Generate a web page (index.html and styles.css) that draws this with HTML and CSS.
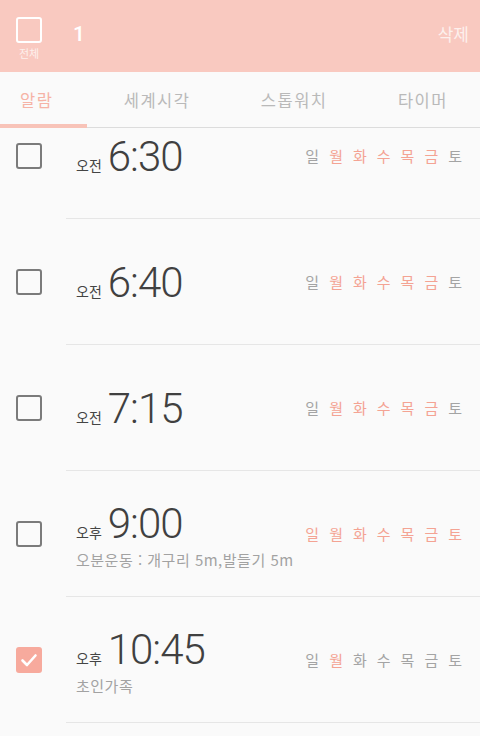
FILE: index.html
```html
<!DOCTYPE html>
<html lang="ko">
<head>
    <meta charset="UTF-8">
    <meta name="viewport" content="width=device-width, initial-scale=1.0">
    <title>알람</title>
    <link rel="stylesheet" href="styles.css">
</head>
<body>

    <header class="appbar">
        <div class="select-all">
            <span class="box box-light"></span>
            <span class="select-label">전체</span>
        </div>
        <span class="count">1</span>
        <span class="spacer"></span>
        <span class="delete">삭제</span>
    </header>

    <nav class="tabs">
        <span class="tab active">알람</span>
        <span class="tab">세계시각</span>
        <span class="tab">스톱워치</span>
        <span class="tab">타이머</span>
    </nav>

    <div class="list">
        <div class="alarms">

            <div class="alarm">
                <div class="check"><span class="box"></span></div>
                <div class="alarm-body">
                    <div class="alarm-info plain">
                        <div class="time-line"><span class="ampm">오전</span><span class="time">6:30</span></div>
                    </div>
                    <div class="days">
                        <span>일</span><span class="on">월</span><span class="on">화</span><span class="on">수</span><span class="on">목</span><span class="on">금</span><span>토</span>
                    </div>
                </div>
            </div>

            <div class="alarm">
                <div class="check"><span class="box"></span></div>
                <div class="alarm-body">
                    <div class="alarm-info plain">
                        <div class="time-line"><span class="ampm">오전</span><span class="time">6:40</span></div>
                    </div>
                    <div class="days">
                        <span>일</span><span class="on">월</span><span class="on">화</span><span class="on">수</span><span class="on">목</span><span class="on">금</span><span>토</span>
                    </div>
                </div>
            </div>

            <div class="alarm">
                <div class="check"><span class="box"></span></div>
                <div class="alarm-body">
                    <div class="alarm-info plain">
                        <div class="time-line"><span class="ampm">오전</span><span class="time">7:15</span></div>
                    </div>
                    <div class="days">
                        <span>일</span><span class="on">월</span><span class="on">화</span><span class="on">수</span><span class="on">목</span><span class="on">금</span><span>토</span>
                    </div>
                </div>
            </div>

            <div class="alarm">
                <div class="check"><span class="box"></span></div>
                <div class="alarm-body">
                    <div class="alarm-info">
                        <div class="time-line"><span class="ampm">오후</span><span class="time">9:00</span></div>
                        <div class="memo">오분운동 : 개구리 5m,발들기 5m</div>
                    </div>
                    <div class="days">
                        <span class="on">일</span><span class="on">월</span><span class="on">화</span><span class="on">수</span><span class="on">목</span><span class="on">금</span><span class="on">토</span>
                    </div>
                </div>
            </div>

            <div class="alarm">
                <div class="check">
                    <span class="box checked">
                        <svg width="18" height="18" viewBox="0 0 18 18"><path d="M2.5 9.5 L7 14 L15.5 4.5" fill="none" stroke="#fff" stroke-width="2.6" stroke-linecap="round" stroke-linejoin="round"/></svg>
                    </span>
                </div>
                <div class="alarm-body">
                    <div class="alarm-info">
                        <div class="time-line"><span class="ampm">오후</span><span class="time">10:45</span></div>
                        <div class="memo">초인가족</div>
                    </div>
                    <div class="days">
                        <span>일</span><span class="on">월</span><span>화</span><span>수</span><span>목</span><span>금</span><span>토</span>
                    </div>
                </div>
            </div>

        </div>
    </div>

</body>
</html>
```

FILE: styles.css
```css
body {
    margin: 0;
    width: 480px;
    height: 736px;
    overflow: hidden;
    background-color: #fafafa;
    font-family: "Noto Sans CJK KR", "Noto Sans", sans-serif;
    color: #555;
}

/* top bar */
.appbar {
    height: 72px;
    background-color: #f9c9c0;
    display: flex;
    align-items: center;
    padding: 0 11px 0 16px;
    color: #fff;
    box-sizing: border-box;
}
.select-all {
    display: flex;
    flex-direction: column;
    align-items: center;
    width: 26px;
    margin-top: 5px;
}
.select-label {
    font-size: 11px;
    line-height: 14px;
    margin-top: 3px;
    color: #fdf0ed;
}
.count {
    font-family: Roboto, sans-serif;
    font-weight: 500;
    font-size: 21px;
    margin-left: 31px;
    margin-top: -4px;
}
.spacer {
    flex: 1;
}
.delete {
    font-size: 17px;
    margin-top: -6px;
    color: #fdf0ed;
}

/* tabs */
.tabs {
    height: 56px;
    display: flex;
    align-items: center;
    justify-content: space-between;
    padding: 0 32px 0 20px;
    border-bottom: 1px solid #dcdcdc;
    box-sizing: border-box;
}
.tab {
    position: relative;
    font-size: 16.5px;
    color: #b9b9b9;
    letter-spacing: 1.5px;
}
.tab.active {
    color: #f6b3a6;
}
.tab.active::after {
    content: "";
    position: absolute;
    left: -20px;
    right: -34px;
    bottom: -16px;
    height: 4px;
    background-color: #f8c3b8;
}

/* checkboxes */
.box {
    width: 26px;
    height: 26px;
    border: 2px solid #7b7b7b;
    border-radius: 3px;
    box-sizing: border-box;
    display: flex;
    align-items: center;
    justify-content: center;
}
.box-light {
    border-color: #fff;
}
.box.checked {
    border: none;
    background-color: #f7aa9d;
}

/* alarm list */
.list {
    height: 608px;
    overflow: hidden;
}
.alarms {
    margin-top: -35px;
}
.alarm {
    height: 126px;
    display: flex;
}
.check {
    width: 66px;
    padding-left: 16px;
    box-sizing: border-box;
    display: flex;
    align-items: center;
}
.alarm-body {
    flex: 1;
    display: flex;
    align-items: center;
    padding: 0 18px 0 10px;
    border-bottom: 1px solid #e6e6e6;
}
.alarm-info {
    flex: 1;
}
.time-line {
    display: flex;
    align-items: baseline;
    line-height: 42px;
    padding-top: 5px;
}
.plain .time-line {
    padding-top: 10px;
}
.ampm {
    font-size: 14px;
    color: #444;
    margin-right: 6px;
}
.time {
    font-family: Roboto, sans-serif;
    font-weight: 300;
    font-size: 42px;
    letter-spacing: -1px;
    color: #404040;
}
.memo {
    font-size: 15px;
    line-height: 20px;
    letter-spacing: 0.5px;
    color: #a2a2a2;
    margin-top: -3px;
}
.days {
    display: flex;
    gap: 10px;
    font-size: 15px;
    color: #a4a4a4;
}
.days .on {
    color: #f4a393;
}
```
